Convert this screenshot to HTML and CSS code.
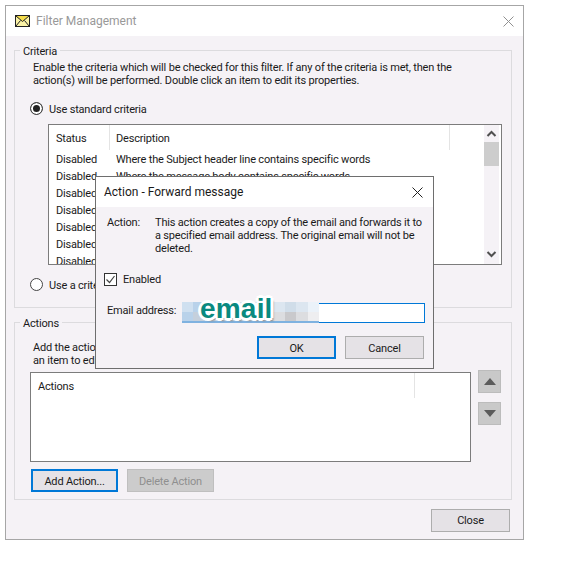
FILE: index.html
```html
<!DOCTYPE html>
<html lang="en">
<head>
<meta charset="utf-8">
<title>Filter Management</title>
<link rel="stylesheet" href="styles.css">
</head>
<body>
<div class="window">
  <header class="titlebar">
    <svg class="mail-icon" width="15" height="12" viewBox="0 0 15 12"><rect x="0.5" y="0.5" width="14" height="11" fill="#fbf3a6" stroke="#222"/><path d="M1 1h13L7.500 6.500z" fill="#f4dc4a"/><path d="M1 1l6.500 5.500L14 1M1 11l4.500-5.500M14 11L9.500 5.500" fill="none" stroke="#222"/></svg>
    <span class="window-title">Filter Management</span>
    <svg class="close-x" width="11" height="11" viewBox="0 0 11 11"><path d="M0.500 0.500l10 10M10.500 0.500l-10 10" stroke="#909090" fill="none"/></svg>
  </header>
  <main class="content">
    <section class="group criteria">
      <span class="legend">Criteria</span>
      <p class="group-text">Enable the criteria which will be checked for this filter. If any of the criteria is met, then the<br>action(s) will be performed. Double click an item to edit its properties.</p>
      <label class="radio-row first-radio"><span class="radio on"></span><span class="radio-text">Use standard criteria</span></label>
      <div class="listbox criteria-list">
        <div class="list-main">
          <div class="list-head">
            <span class="col-status">Status</span>
            <span class="col-desc">Description</span>
            <span class="col-rest"></span>
          </div>
          <div class="row"><span class="cell-status">Disabled</span><span>Where the Subject header line contains specific words</span></div>
          <div class="row"><span class="cell-status">Disabled</span><span>Where the message body contains specific words</span></div>
          <div class="row"><span class="cell-status">Disabled</span><span>Where the From line contains specific words</span></div>
          <div class="row"><span class="cell-status">Disabled</span><span>Where the To line contains specific words</span></div>
          <div class="row"><span class="cell-status">Disabled</span><span>Where the CC line contains specific words</span></div>
          <div class="row"><span class="cell-status">Disabled</span><span>Where the message is from a sender</span></div>
          <div class="row"><span class="cell-status">Disabled</span><span>Where the message size is large</span></div>
        </div>
        <div class="scrollbar">
          <svg class="sb-arrow" width="15" height="17" viewBox="0 0 15 17"><path d="M3.500 11l4-4 4 4" fill="none" stroke="#505050" stroke-width="2"/></svg>
          <div class="sb-thumb"></div>
          <div class="sb-track"></div>
          <svg class="sb-arrow" width="15" height="17" viewBox="0 0 15 17"><path d="M3.500 5l4 4 4-4" fill="none" stroke="#505050" stroke-width="2"/></svg>
        </div>
      </div>
      <label class="radio-row second-radio"><span class="radio"></span><span class="radio-text">Use a criteria</span></label>
    </section>
    <section class="group actions">
      <span class="legend">Actions</span>
      <p class="group-text">Add the actions to perform. Double click<br>an item to edit</p>
      <div class="actions-body">
        <div class="listbox actions-list">
          <div class="list-head action-head">
            <span class="col-action">Actions</span>
            <span class="col-rest"></span>
          </div>
        </div>
        <div class="move-buttons">
          <button class="move-btn" type="button"><svg width="12" height="7" viewBox="0 0 12 7"><path d="M6 0l6 7H0z" fill="#5c5c5c"/></svg></button>
          <button class="move-btn" type="button"><svg width="12" height="7" viewBox="0 0 12 7"><path d="M0 0h12L6 7z" fill="#5c5c5c"/></svg></button>
        </div>
      </div>
      <div class="action-buttons">
        <button class="btn btn-default" type="button">Add Action...</button>
        <button class="btn btn-disabled" type="button">Delete Action</button>
      </div>
    </section>
    <div class="footer">
      <button class="btn" type="button">Close</button>
    </div>
  </main>

  <div class="dialog">
    <header class="dialog-title">
      <span>Action - Forward message</span>
      <svg width="11" height="11" viewBox="0 0 11 11"><path d="M0.500 0.500l10 10M10.500 0.500l-10 10" stroke="#222" fill="none"/></svg>
    </header>
    <div class="dialog-body">
      <div class="action-desc">
        <span class="desc-label">Action:</span>
        <span class="desc-text">This action creates a copy of the email and forwards it to<br>a specified email address. The original email will not be<br>deleted.</span>
      </div>
      <label class="check-row">
        <svg class="checkbox" width="13" height="13" viewBox="0 0 13 13"><rect x="0.500" y="0.500" width="12" height="12" fill="#fff" stroke="#333"/><path d="M2.500 6.500l3 3 5-6.500" fill="none" stroke="#444" stroke-width="1.200"/></svg>
        Enabled
      </label>
      <div class="email-row">
        <span class="email-label">Email address:</span>
        <div class="email-input"></div>
        <div class="redaction">
          <i class="c1"></i><i class="c2"></i><i class="c1"></i><i class="c1"></i><i class="c1"></i><i class="c1"></i><i class="c1"></i><i class="c3"></i><i class="c3"></i><i class="c4"></i><i class="c3"></i><i class="c5"></i>
          <i class="c2"></i><i class="c6"></i><i class="c1"></i><i class="c1"></i><i class="c1"></i><i class="c1"></i><i class="c1"></i><i class="c6"></i><i class="c7"></i><i class="c8"></i><i class="c7"></i><i class="c9"></i>
        </div>
        <span class="sticker">email</span>
      </div>
      <div class="dialog-buttons">
        <button class="btn btn-default" type="button">OK</button>
        <button class="btn" type="button">Cancel</button>
      </div>
    </div>
  </div>
</div>
</body>
</html>
```

FILE: styles.css
```css
* { box-sizing: border-box; }
html, body { margin: 0; padding: 0; background: #fff; }
body {
  font-family: "Roboto", "Noto Sans", sans-serif;
  font-size: 11px;
  line-height: 13px;
  letter-spacing: -0.18px;
  color: #1a1a1a;
  width: 586px;
  height: 572px;
  overflow: hidden;
}
.window {
  position: relative;
  width: 519px;
  height: 535px;
  margin: 5px 0 0 5px;
  border: 1px solid #a6a6a6;
  background: #f5f2f6;
}
.titlebar {
  display: flex;
  align-items: center;
  height: 30px;
  padding: 0 9px 0 9px;
  background: #fff;
}
.window-title { margin-left: 6px; color: #999; font-size: 12px; letter-spacing: 0; }
.close-x { margin-left: auto; }
.content { padding: 14px 11px 0 8px; }

.group { position: relative; border: 1px solid #dcdbde; }
.criteria { height: 258px; padding: 10px 0 0 18px; }
.actions { height: 178px; margin-top: 14px; padding: 18px 0 0 18px; }
.legend {
  position: absolute;
  left: 5px;
  top: -6px;
  padding: 0 3px;
  background: #f5f2f6;
}
.group-text { margin: 0; white-space: nowrap; }

.radio-row { display: flex; align-items: center; gap: 6px; height: 14px; margin-left: -3px; }
.radio-text { padding-top: 2px; }
.first-radio { margin-top: 14px; }
.second-radio { margin-top: 12px; }
.radio {
  display: block;
  flex: none;
  width: 13px;
  height: 13px;
  border: 1px solid #444;
  border-radius: 50%;
  background: #fff;
}
.radio.on { background: #222; box-shadow: inset 0 0 0 2px #fff; }

.listbox { display: flex; background: #fff; border: 1px solid #7c7c7c; overflow: hidden; }
.criteria-list { width: 454px; height: 141px; margin: 9px 0 0 15px; }
.list-main { flex: 1; min-width: 0; }
.list-head { display: flex; height: 25px; align-items: center; }
.list-head span { height: 100%; line-height: 27px; }
.col-status { flex: none; width: 61px; padding-left: 7px; border-right: 1px solid #e4e4e4; }
.col-desc { flex: none; width: 340px; padding-left: 6px; border-right: 1px solid #e4e4e4; }
.col-rest { flex: 1; }
.row { display: flex; height: 17px; line-height: 19px; white-space: nowrap; }
.cell-status { flex: none; width: 67px; padding-left: 7px; }
.scrollbar { display: flex; flex-direction: column; flex: none; width: 15px; margin-right: 2px; background: #f5f2f6; }
.sb-arrow { flex: none; }
.sb-thumb { height: 24px; background: #cdcdcd; flex: none; }
.sb-track { flex: 1; }

.actions-body { display: flex; margin: 5px 0 0 -3px; }
.actions-list { display: block; width: 441px; height: 90px; }
.action-head { width: 100%; }
.col-action { flex: none; width: 384px; padding-left: 7px; border-right: 1px solid #e4e4e4; }
.move-buttons { display: flex; flex-direction: column; gap: 9px; margin: -2px 0 0 7px; }
.move-btn {
  display: flex;
  align-items: center;
  justify-content: center;
  width: 23px;
  height: 23px;
  padding: 0;
  background: #c9c9c9;
  border: 1px solid #bcbcbc;
}
.action-buttons { display: flex; gap: 9px; margin: 7px 0 0 -2px; }

.btn {
  width: 79px;
  height: 23px;
  padding: 0;
  font: inherit;
  letter-spacing: inherit;
  color: #1a1a1a;
  background: #e5e2e6;
  border: 1px solid #adadad;
}
.action-buttons .btn, .dialog-buttons .btn { padding-top: 2px; }
.btn-default { border: 2px solid #0078d7; }
.action-buttons .btn { width: 87px; }
.btn-disabled { background: #cccccc; border-color: #bfbfbf; color: #8f8f8f; }
.footer { display: flex; justify-content: flex-end; margin-top: 9px; padding-right: 2px; }

.dialog {
  position: absolute;
  left: 89px;
  top: 170px;
  width: 339px;
  height: 193px;
  background: #f5f2f6;
  border: 1px solid #6e6e6e;
}
.dialog-title {
  display: flex;
  align-items: center;
  justify-content: space-between;
  height: 30px;
  padding: 0 10px 0 8px;
  background: #fff;
  font-size: 12px;
  letter-spacing: 0;
}
.dialog-body { padding: 9px 8px 0 8px; }
.action-desc { display: flex; padding-left: 3px; }
.desc-label { flex: none; width: 48px; }
.desc-text { white-space: nowrap; }
.check-row { display: flex; align-items: center; gap: 6px; margin-top: 18px; }
.email-row { position: relative; display: flex; align-items: center; margin-top: 17px; padding-left: 3px; height: 20px; }
.email-label { flex: none; width: 75px; padding-bottom: 6px; }
.email-input { flex: none; width: 243px; height: 20px; background: #fff; border: 1px solid #0078d7; }
.redaction {
  position: absolute;
  left: 78px;
  top: -1px;
  width: 137px;
  height: 21px;
  display: grid;
  grid-template-columns: repeat(12, 1fr);
  grid-template-rows: 1fr 1fr;
  border-bottom: 2px solid #7fb2e0;
}
.c1 { background: #cfe0f0; }
.c2 { background: #b9d2ea; }
.c3 { background: #dce6f0; }
.c4 { background: #d0dde9; }
.c5 { background: #ebf2f9; }
.c6 { background: #c5d0dc; }
.c7 { background: #dcdde0; }
.c8 { background: #c9c9cc; }
.c9 { background: #eeeef0; }
.sticker {
  position: absolute;
  left: 96px;
  top: -9px;
  font-family: "Liberation Sans", sans-serif;
  font-weight: 700;
  font-size: 28px;
  line-height: 30px;
  letter-spacing: 0.2px;
  color: #0a8a80;
  text-shadow: 3px 0 0 #fff, -3px 0 0 #fff, 0 3px 0 #fff, 0 -3px 0 #fff, 2px 2px 0 #fff, -2px 2px 0 #fff, 2px -2px 0 #fff, -2px -2px 0 #fff, 3px 3px 2px #888;
}
.dialog-buttons { display: flex; justify-content: flex-end; gap: 9px; margin-top: 13px; padding-right: 1px; }
```
